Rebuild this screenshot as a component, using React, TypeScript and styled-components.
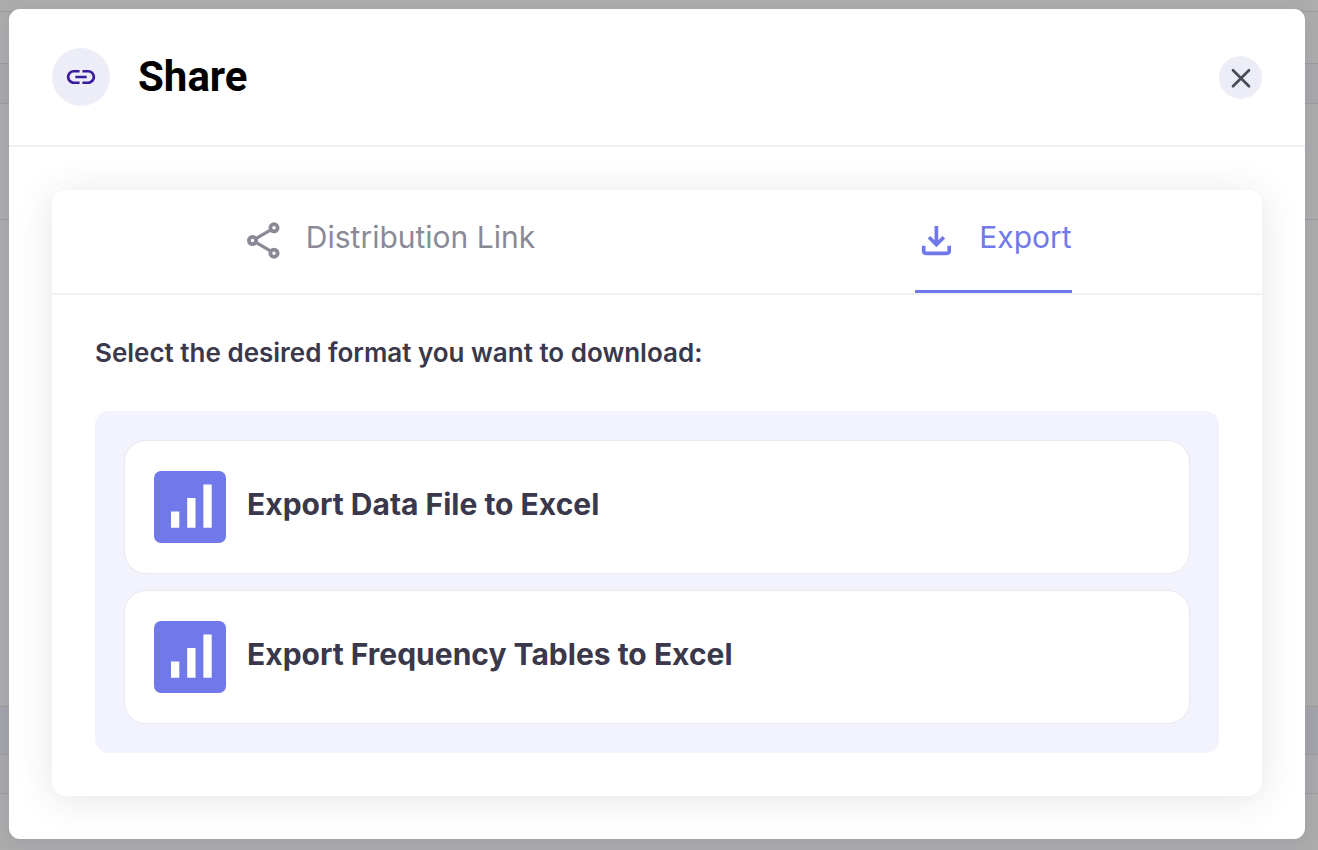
import React from "react";
import styled, { createGlobalStyle } from "styled-components";

const GlobalStyle = createGlobalStyle`
  *, *::before, *::after { box-sizing: border-box; }
  body { margin: 0; background: #adadae; font-family: Inter, "Liberation Sans", sans-serif; }
  button { font: inherit; color: inherit; border: 0; background: none; padding: 0; cursor: pointer; }
  h1, h2 { margin: 0; }
`;

const Screen = styled.div`
  position: relative;
  min-height: 100vh;
`;

const Backdrop = styled.div`
  position: absolute;
  inset: 0;
  display: flex;
  flex-direction: column;
`;

const Band = styled.div<{ $height?: number; $tone?: string }>`
  flex: ${(p) => (p.$height ? `0 0 ${p.$height}px` : "1 0 0")};
  border-bottom: 1px solid #9c9c9f;
  background: ${(p) => p.$tone ?? "#adadae"};
`;

const BandEnd = styled(Band)`
  border-bottom: 0;
`;

const DialogLayer = styled.div`
  position: relative;
  padding: 9px 13px 11px 9px;
`;

const Dialog = styled.section`
  background: #fff;
  border-radius: 11px;
  box-shadow: 0 4px 22px rgba(60, 60, 80, 0.12);
`;

const Header = styled.header`
  display: flex;
  align-items: center;
  gap: 28px;
  height: 138px;
  padding: 0 43px;
  border-bottom: 2px solid #efeff5;
`;

const HeaderIcon = styled.span`
  display: grid;
  place-items: center;
  width: 58px;
  height: 58px;
  border-radius: 50%;
  background: #ededf8;
`;

const Title = styled.h1`
  flex: 1;
  font-family: Roboto, "Liberation Sans", sans-serif;
  font-size: 42px;
  line-height: 50px;
  font-weight: 700;
  color: #000;
`;

const CloseButton = styled.button`
  display: grid;
  place-items: center;
  width: 43px;
  height: 43px;
  border-radius: 50%;
  background: #ededf8;
`;

const Body = styled.div`
  padding: 43px;
`;

const Card = styled.div`
  border-radius: 14px;
  background: #fff;
  box-shadow: 0 4px 36px rgba(40, 40, 60, 0.12);
`;

const Tabs = styled.div`
  display: grid;
  grid-template-columns: 1fr 1fr;
  border-bottom: 2px solid #f2f2f5;
`;

const TabCell = styled.div`
  display: flex;
  justify-content: center;
  padding-left: 68px;
`;

const Tab = styled.button<{ $active?: boolean }>`
  display: flex;
  align-items: center;
  gap: 21px;
  height: 103px;
  color: ${(p) => (p.$active ? "#7179ea" : "#8a8a97")};
  border-bottom: 3px solid ${(p) => (p.$active ? "#7179ea" : "transparent")};
`;

const Label = styled.span<{ $strong?: boolean }>`
  padding-bottom: 6px;
  font-size: 30px;
  line-height: 36px;
  font-weight: ${(p) => (p.$strong ? 700 : 400)};
`;

const Content = styled.div`
  padding: 43px;
`;

const Prompt = styled.h2`
  font-size: 26px;
  line-height: 30px;
  font-weight: 600;
  color: #3a384a;
`;

const Options = styled.div`
  display: flex;
  flex-direction: column;
  gap: 16px;
  margin-top: 43px;
  padding: 29px;
  border-radius: 14px;
  background: #f3f3fd;
`;

const Option = styled.button`
  display: flex;
  align-items: center;
  gap: 21px;
  height: 134px;
  padding: 0 29px;
  border: 1px solid #e8e8f1;
  border-radius: 22px;
  background: #fff;
  color: #3a384a;
  text-align: left;
`;

const LinkIcon = () => (
  <svg width="34" height="34" viewBox="0 0 24 24" fill="#3a1a9e" aria-hidden="true">
    <path d="M3.9 12c0-1.71 1.39-3.1 3.1-3.1h4V7H7c-2.76 0-5 2.24-5 5s2.24 5 5 5h4v-1.9H7c-1.71 0-3.1-1.39-3.1-3.1zM8 12.9h8v-1.8H8v1.8zm9-5.9h-4v1.9h4c1.71 0 3.1 1.39 3.1 3.1s-1.39 3.1-3.1 3.1h-4V17h4c2.76 0 5-2.24 5-5s-2.24-5-5-5z" />
  </svg>
);

const CloseIcon = () => (
  <svg width="43" height="43" viewBox="0 0 43 43" fill="none" stroke="#4b4b58" strokeWidth="2.7" strokeLinecap="round" aria-hidden="true">
    <path d="M14 14.3l16 16M30 14.3l-16 16" />
  </svg>
);

const ShareIcon = () => (
  <svg width="43" height="43" viewBox="0 0 43 43" fill="none" stroke="currentColor" strokeWidth="3.8" aria-hidden="true">
    <circle cx="32" cy="8.8" r="3.6" />
    <circle cx="10.5" cy="21.5" r="3.6" />
    <circle cx="32" cy="34.2" r="3.6" />
    <path d="M13.8 19.6 28.8 10.8M13.8 23.4 28.8 32.2" strokeWidth="3.2" />
  </svg>
);

const DownloadIcon = () => (
  <svg width="43" height="43" viewBox="0 0 43 43" fill="none" stroke="currentColor" strokeWidth="3.7" aria-hidden="true">
    <path d="M21.4 7V25" />
    <path d="M14 18.2l7.4 7.4 7.4-7.4" />
    <path d="M8.7 26.8V32.1Q8.7 34.3 10.9 34.3H32Q34.2 34.3 34.2 32.1V26.8" />
  </svg>
);

const ChartIcon = () => (
  <svg width="72" height="72" viewBox="0 0 72 72" aria-hidden="true">
    <rect width="72" height="72" rx="7" fill="#7179ea" />
    <path fill="#fff" d="M17 40.5h8.3v16.2H17zM33.2 27h8.3v29.7h-8.3zM49.4 13.5h8.3v43.2h-8.3z" />
  </svg>
);

const exportOptions = ["Export Data File to Excel", "Export Frequency Tables to Excel"];

export default function App() {
  return (
    <Screen>
      <GlobalStyle />
      <Backdrop aria-hidden="true">
        <Band $height={12} />
        <Band $height={52} />
        <Band $height={40} $tone="#a9a9ad" />
        <Band $height={116} />
        <Band />
        <Band $height={48} $tone="#a5a5ad" />
        <Band $height={39} $tone="#aaaaad" />
        <BandEnd $height={56} />
      </Backdrop>
      <DialogLayer>
        <Dialog role="dialog" aria-labelledby="share-title">
          <Header>
            <HeaderIcon>
              <LinkIcon />
            </HeaderIcon>
            <Title id="share-title">Share</Title>
            <CloseButton type="button" aria-label="Close">
              <CloseIcon />
            </CloseButton>
          </Header>
          <Body>
            <Card>
              <Tabs role="tablist">
                <TabCell role="presentation">
                  <Tab type="button" role="tab" aria-selected={false}>
                    <ShareIcon />
                    <Label>Distribution Link</Label>
                  </Tab>
                </TabCell>
                <TabCell role="presentation">
                  <Tab type="button" role="tab" aria-selected $active>
                    <DownloadIcon />
                    <Label>Export</Label>
                  </Tab>
                </TabCell>
              </Tabs>
              <Content role="tabpanel">
                <Prompt>Select the desired format you want to download:</Prompt>
                <Options>
                  {exportOptions.map((name) => (
                    <Option type="button" key={name}>
                      <ChartIcon />
                      <Label $strong>{name}</Label>
                    </Option>
                  ))}
                </Options>
              </Content>
            </Card>
          </Body>
        </Dialog>
      </DialogLayer>
    </Screen>
  );
}
